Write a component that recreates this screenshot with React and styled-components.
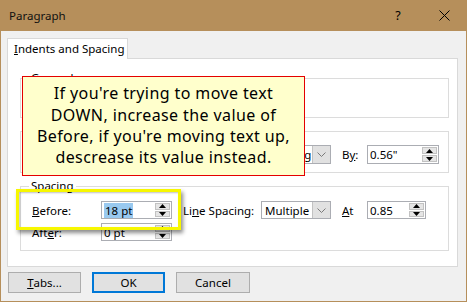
import React from 'react';
import styled, { createGlobalStyle } from 'styled-components';

const Global = createGlobalStyle`
  body {
    margin: 0;
    background: #ffffff;
  }
  * {
    box-sizing: border-box;
  }
`;

const Window = styled.div`
  width: 467px;
  height: 302px;
  display: flex;
  flex-direction: column;
  background: #f0f0f0;
  border: 1px solid #b68f5b;
  border-top: none;
  font-family: 'Noto Sans', 'Open Sans', sans-serif;
  font-size: 11.5px;
  color: #000;
  overflow: hidden;
`;

const TitleBar = styled.div`
  height: 31px;
  flex: none;
  display: flex;
  align-items: center;
  background: #b68f5b;
  padding-left: 8px;
`;

const Title = styled.span`
  font-size: 11.5px;
  color: #111;
`;

const CaptionButton = styled.div`
  width: 46px;
  height: 31px;
  display: flex;
  align-items: center;
  justify-content: center;
  font-size: 12.5px;
  margin-left: ${({ $first }) => ($first ? 'auto' : '0')};
  margin-right: ${({ $last }) => ($last ? '-1px' : '0')};
`;

const Body = styled.div`
  flex: 1;
  display: flex;
  flex-direction: column;
  padding: 7px 8px 0 6px;
`;

const TabStrip = styled.div`
  display: flex;
`;

const Tab = styled.div`
  width: 121px;
  height: 21px;
  margin-bottom: -1px;
  position: relative;
  z-index: 1;
  background: #fff;
  border: 1px solid #d9d9d9;
  border-bottom: none;
  padding-left: 6px;
  line-height: 19px;
  font-size: 11.5px;
`;

const Panel = styled.div`
  position: relative;
  height: 209px;
  background: #fff;
  border: 1px solid #d9d9d9;
  padding: 11px 8px 0 12px;
  display: flex;
  flex-direction: column;
  gap: 5px;
`;

const Group = styled.fieldset`
  margin: 0;
  padding: 0 8px 0 11px;
  border: 1px solid #dcdcdc;
  height: ${({ $h }) => $h}px;
  min-width: 0;
`;

const Legend = styled.legend`
  padding: 0 2px;
  margin-left: -3px;
  line-height: 16px;
  font-size: 11.5px;
`;

const Row = styled.div`
  display: flex;
  align-items: center;
  height: ${({ $h }) => $h}px;
  margin-top: ${({ $mt }) => $mt}px;
`;

const Label = styled.span`
  width: ${({ $w }) => $w}px;
  flex: none;
  white-space: nowrap;
`;

const Spacer = styled.span`
  width: ${({ $w }) => $w}px;
  flex: none;
`;

const Spin = styled.div`
  width: ${({ $w }) => $w}px;
  height: 100%;
  flex: none;
  display: flex;
  align-items: stretch;
  border: 1px solid #abadb3;
  background: #fff;
`;

const SpinText = styled.span`
  flex: 1;
  padding-left: 2px;
  display: flex;
  align-items: center;
`;

const Selected = styled.span`
  background: #99c9ef;
  padding: 0 1px;
  line-height: 15px;
`;

const SpinButtons = styled.div`
  width: 15px;
  margin: 1px;
  display: flex;
  flex-direction: column;
  gap: 1px;
`;

const SpinButton = styled.div`
  flex: 1;
  display: flex;
  align-items: center;
  justify-content: center;
  background: #e5e5e5;
  border: 1px solid #c2c2c2;
`;

const Select = styled.div`
  width: ${({ $w }) => $w}px;
  height: 100%;
  flex: none;
  display: flex;
  border: 1px solid #abadb3;
  background: #fff;
`;

const SelectText = styled.span`
  flex: 1;
  padding-left: 3px;
  display: flex;
  align-items: center;
  overflow: hidden;
  white-space: nowrap;
`;

const SelectArrow = styled.div`
  width: 18px;
  display: flex;
  align-items: center;
  justify-content: center;
  background: #e1e1e1;
  border-left: 1px solid #c2c2c2;
`;

const ButtonRow = styled.div`
  display: flex;
  align-items: center;
  margin-top: 5px;
  padding-left: 1px;
  margin-right: -2px;
`;

const Button = styled.div`
  width: ${({ $w }) => $w}px;
  height: 21px;
  display: flex;
  align-items: center;
  justify-content: center;
  background: #e1e1e1;
  border: ${({ $default }) => ($default ? '2px solid #0078d7' : '1px solid #adadad')};
  margin-left: ${({ $push }) => ($push ? 'auto' : '0')};
  & + & {
    margin-left: ${({ $push }) => ($push ? 'auto' : '11px')};
  }
`;

const Callout = styled.div`
  position: absolute;
  left: 14px;
  top: 17px;
  width: 283px;
  height: 100px;
  z-index: 2;
  background: #ffffcc;
  border: 1px solid #e40000;
  display: flex;
  align-items: center;
  justify-content: center;
  text-align: center;
  font-size: 16px;
  line-height: 21.3px;
  letter-spacing: 0.4px;
  color: #000;
`;

const Highlight = styled.div`
  position: absolute;
  left: 8px;
  top: 130px;
  width: 165px;
  height: 41px;
  z-index: 2;
  border: 3.5px solid #f7f700;
  box-shadow: 2px 3px 4px rgba(0, 0, 0, 0.45), inset 1px 1px 2px rgba(0, 0, 0, 0.25);
`;

const Up = () => (
  <svg width="7" height="4" viewBox="0 0 7 4">
    <polygon points="3.5,0 7,4 0,4" fill="#000" />
  </svg>
);

const Down = () => (
  <svg width="7" height="4" viewBox="0 0 7 4">
    <polygon points="0,0 7,0 3.5,4" fill="#000" />
  </svg>
);

const Chevron = () => (
  <svg width="9" height="5" viewBox="0 0 9 5">
    <polyline points="0.5,0.5 4.5,4.5 8.5,0.5" fill="none" stroke="#7a7a7a" strokeWidth="1" />
  </svg>
);

const SpinInput = ({ w, children }) => (
  <Spin $w={w}>
    <SpinText>{children}</SpinText>
    <SpinButtons>
      <SpinButton><Up /></SpinButton>
      <SpinButton><Down /></SpinButton>
    </SpinButtons>
  </Spin>
);

const Dropdown = ({ w, children }) => (
  <Select $w={w}>
    <SelectText>{children}</SelectText>
    <SelectArrow><Chevron /></SelectArrow>
  </Select>
);

const App = () => (
  <>
    <Global />
    <Window>
      <TitleBar>
        <Title>Paragraph</Title>
        <CaptionButton $first>?</CaptionButton>
        <CaptionButton $last>
          <svg width="11" height="11" viewBox="0 0 11 11">
            <path d="M0.5 0.5 L10.5 10.5 M10.5 0.5 L0.5 10.5" stroke="#000" strokeWidth="1" />
          </svg>
        </CaptionButton>
      </TitleBar>
      <Body>
        <TabStrip>
          <Tab><u>I</u>ndents and Spacing</Tab>
        </TabStrip>
        <Panel>
          <Group $h={48}>
            <Legend>General</Legend>
          </Group>
          <Group $h={50}>
            <Legend>Indentation</Legend>
            <Row $h={19} $mt={6}>
              <Spacer $w={229} />
              <Dropdown w={70}>Hanging</Dropdown>
              <Spacer $w={11} />
              <Label $w={25}>B<u>y</u>:</Label>
              <SpinInput w={72}>0.56"</SpinInput>
            </Row>
          </Group>
          <Group $h={73}>
            <Legend>Spacing</Legend>
            <Row $h={18} $mt={7}>
              <Label $w={69}><u>B</u>efore:</Label>
              <SpinInput w={71}><Selected>18 pt</Selected></SpinInput>
              <Spacer $w={11} />
              <Label $w={78}>Li<u>n</u>e Spacing:</Label>
              <Dropdown w={70}>Multiple</Dropdown>
              <Spacer $w={11} />
              <Label $w={25}><u>A</u>t</Label>
              <SpinInput w={59}>0.85</SpinInput>
            </Row>
            <Row $h={18} $mt={4}>
              <Label $w={69}>Aft<u>e</u>r:</Label>
              <SpinInput w={71}>0 pt</SpinInput>
            </Row>
          </Group>
          <Callout>
            <span>
              If you're trying to move text
              <br />
              DOWN, increase the value of
              <br />
              Before, if you're moving text up,
              <br />
              descrease its value instead.
            </span>
          </Callout>
          <Highlight />
        </Panel>
        <ButtonRow>
          <Button $w={73}><u>T</u>abs...</Button>
          <Button $w={73} $default $push>OK</Button>
          <Button $w={74}>Cancel</Button>
        </ButtonRow>
      </Body>
    </Window>
  </>
);

export default App;
